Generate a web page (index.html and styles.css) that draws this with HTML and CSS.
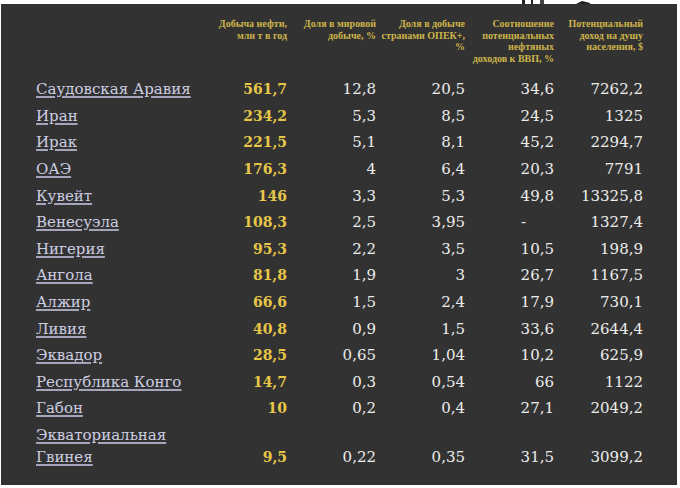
FILE: index.html
```html
<!DOCTYPE html>
<html lang="ru">
<head>
<meta charset="utf-8">
<title>ОПЕК+</title>
<link rel="stylesheet" href="styles.css">
</head>
<body>
<div class="strip">
  <svg class="strip-art" width="120" height="4" viewBox="0 0 120 4">
    <rect x="22" y="0" width="3" height="4" fill="#222"/>
    <rect x="31" y="0" width="2" height="4" fill="#222"/>
    <rect x="40" y="0" width="4" height="4" fill="#444"/>
    <path d="M76 4 L82 1 L90 3 L90 4 Z" fill="#222"/>
  </svg>
</div>
<div class="panel">
  <table class="data">
    <thead>
      <tr>
        <th class="c-name"></th>
        <th>Добыча нефти,<br>млн т в год</th>
        <th>Доля в мировой<br>добыче, %</th>
        <th>Доля в добыче<br>странами ОПЕК+,<br>%</th>
        <th>Соотношение<br>потенциальных<br>нефтяных<br>доходов к ВВП, %</th>
        <th>Потенциальный<br>доход на душу<br>населения, $</th>
      </tr>
    </thead>
    <tbody>
      <tr><td class="c-name"><a class="country">Саудовская Аравия</a></td><td class="oil">561,7</td><td>12,8</td><td>20,5</td><td>34,6</td><td>7262,2</td></tr>
      <tr><td class="c-name"><a class="country">Иран</a></td><td class="oil">234,2</td><td>5,3</td><td>8,5</td><td>24,5</td><td>1325</td></tr>
      <tr><td class="c-name"><a class="country">Ирак</a></td><td class="oil">221,5</td><td>5,1</td><td>8,1</td><td>45,2</td><td>2294,7</td></tr>
      <tr><td class="c-name"><a class="country">ОАЭ</a></td><td class="oil">176,3</td><td>4</td><td>6,4</td><td>20,3</td><td>7791</td></tr>
      <tr><td class="c-name"><a class="country">Кувейт</a></td><td class="oil">146</td><td>3,3</td><td>5,3</td><td>49,8</td><td>13325,8</td></tr>
      <tr><td class="c-name"><a class="country">Венесуэла</a></td><td class="oil">108,3</td><td>2,5</td><td>3,95</td><td class="dash">-</td><td>1327,4</td></tr>
      <tr><td class="c-name"><a class="country">Нигерия</a></td><td class="oil">95,3</td><td>2,2</td><td>3,5</td><td>10,5</td><td>198,9</td></tr>
      <tr><td class="c-name"><a class="country">Ангола</a></td><td class="oil">81,8</td><td>1,9</td><td>3</td><td>26,7</td><td>1167,5</td></tr>
      <tr><td class="c-name"><a class="country">Алжир</a></td><td class="oil">66,6</td><td>1,5</td><td>2,4</td><td>17,9</td><td>730,1</td></tr>
      <tr><td class="c-name"><a class="country">Ливия</a></td><td class="oil">40,8</td><td>0,9</td><td>1,5</td><td>33,6</td><td>2644,4</td></tr>
      <tr><td class="c-name"><a class="country">Эквадор</a></td><td class="oil">28,5</td><td>0,65</td><td>1,04</td><td>10,2</td><td>625,9</td></tr>
      <tr><td class="c-name"><a class="country">Республика Конго</a></td><td class="oil">14,7</td><td>0,3</td><td>0,54</td><td>66</td><td>1122</td></tr>
      <tr><td class="c-name"><a class="country">Габон</a></td><td class="oil">10</td><td>0,2</td><td>0,4</td><td>27,1</td><td>2049,2</td></tr>
      <tr><td class="c-name"><a class="country">Экваториальная<br>Гвинея</a></td><td class="oil">9,5</td><td>0,22</td><td>0,35</td><td>31,5</td><td>3099,2</td></tr>
    </tbody>
  </table>
</div>
</body>
</html>
```
FILE: styles.css
```css
html, body {
  margin: 0;
  padding: 0;
  background: #ffffff;
}
body {
  width: 680px;
  height: 488px;
  overflow: hidden;
  font-family: "DejaVu Serif", "Liberation Serif", serif;
}
.strip {
  height: 4px;
  display: flex;
  justify-content: flex-end;
  padding-right: 60px;
}
.strip-art {
  display: block;
}
.panel {
  margin: 0 3px 0 1px;
  height: 481px;
  background: #323232;
  padding: 14px 0 0 35px;
  box-sizing: border-box;
}
.data {
  border-collapse: collapse;
  table-layout: fixed;
  width: 607px;
}
.data th {
  width: 89px;
  font-family: "Liberation Serif", serif;
  font-weight: bold;
  font-size: 10px;
  line-height: 11.5px;
  color: #cdb54a;
  text-align: right;
  vertical-align: top;
  padding: 0 0 12px 0;
}
.data th.c-name {
  width: 162px;
}
.data td {
  font-size: 15px;
  line-height: 22px;
  color: #ececec;
  text-align: right;
  vertical-align: bottom;
  padding: 2.3px 0;
  white-space: nowrap;
}
.data td.c-name {
  text-align: left;
  font-size: 15px;
}
.country {
  color: #cdcee2;
  text-decoration: underline;
  text-decoration-color: #a4a5bb;
  text-decoration-thickness: 1.5px;
  text-underline-offset: 2px;
}
.data td.oil {
  color: #e6c648;
  font-weight: bold;
  font-size: 14px;
}
.data td.dash {
  padding-right: 28px;
}
```
